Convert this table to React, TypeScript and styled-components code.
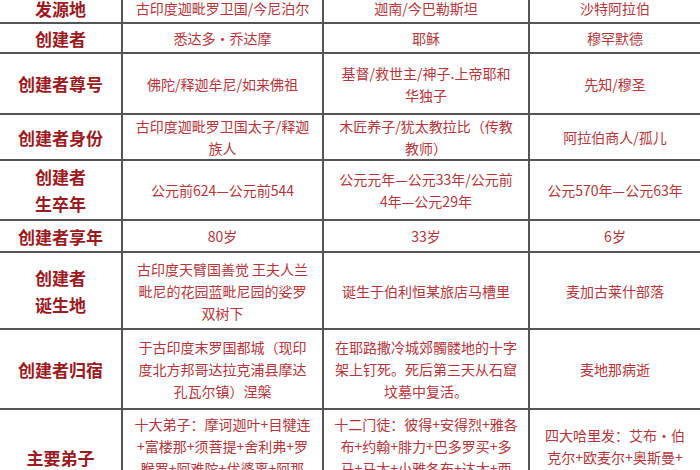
import React from 'react';
import styled, { createGlobalStyle } from 'styled-components';

const GlobalStyle = createGlobalStyle`
  html, body {
    margin: 0;
    padding: 0;
    background: #ffffff;
    overflow: hidden;
  }
  body {
    font-family: "Noto Sans CJK SC", "Noto Sans", sans-serif;
  }
`;

// 表格整体略微超出视口顶部和左侧
const Page = styled.div`
  width: 700px;
  height: 470px;
  overflow: hidden;
`;

const Table = styled.table`
  border-collapse: collapse;
  table-layout: fixed;
  margin: -8px 0 0 -2px;
  width: 702px;
`;

const Col = styled.col<{ $w: number }>`
  width: ${(p) => p.$w}px;
`;

const Row = styled.tr<{ $h: number }>`
  height: ${(p) => p.$h}px;
`;

const HeadCell = styled.th`
  border: 2px solid #555;
  color: #9a1a1f;
  font-size: 17px;
  font-weight: 700;
  line-height: 27px;
  text-align: center;
  vertical-align: middle;
  padding: 0 4px;
`;

const Cell = styled.td`
  border: 2px solid #555;
  color: #b3363c;
  font-size: 14px;
  line-height: 22px;
  text-align: center;
  vertical-align: middle;
  padding: 0 6px;
  white-space: nowrap;
`;

const Line = styled.span`
  display: block;
`;

type RowData = { head: string[]; h: number; cells: string[][] };

const widths = [123, 201, 206, 172];

const rows: RowData[] = [
  {
    head: ['发源地'],
    h: 30,
    cells: [['古印度迦毗罗卫国/今尼泊尔'], ['迦南/今巴勒斯坦'], ['沙特阿拉伯']],
  },
  {
    head: ['创建者'],
    h: 30,
    cells: [['悉达多·乔达摩'], ['耶稣'], ['穆罕默德']],
  },
  {
    head: ['创建者尊号'],
    h: 61,
    cells: [['佛陀/释迦牟尼/如来佛祖'], ['基督/救世主/神子.上帝耶和', '华独子'], ['先知/穆圣']],
  },
  {
    head: ['创建者身份'],
    h: 46,
    cells: [
      ['古印度迦毗罗卫国太子/释迦', '族人'],
      ['木匠养子/犹太教拉比（传教', '教师）'],
      ['阿拉伯商人/孤儿'],
    ],
  },
  {
    head: ['创建者', '生卒年'],
    h: 60,
    cells: [
      ['公元前624—公元前544'],
      ['公元元年—公元33年/公元前', '4年—公元29年'],
      ['公元570年—公元63年'],
    ],
  },
  {
    head: ['创建者享年'],
    h: 32,
    cells: [['80岁'], ['33岁'], ['6岁']],
  },
  {
    head: ['创建者', '诞生地'],
    h: 77,
    cells: [
      ['古印度天臂国善觉 王夫人兰', '毗尼的花园蓝毗尼园的娑罗', '双树下'],
      ['诞生于伯利恒某旅店马槽里'],
      ['麦加古莱什部落'],
    ],
  },
  {
    head: ['创建者归宿'],
    h: 80,
    cells: [
      ['于古印度末罗国都城（现印', '度北方邦哥达拉克浦县摩达', '孔瓦尔镇）涅槃'],
      ['在耶路撒冷城郊髑髅地的十字', '架上钉死。死后第三天从石窟', '坟墓中复活。'],
      ['麦地那病逝'],
    ],
  },
  {
    head: ['主要弟子'],
    h: 96,
    cells: [
      ['十大弟子：摩诃迦叶+目犍连', '+富楼那+须菩提+舍利弗+罗', '睺罗+阿难陀+优婆离+阿那', '律+迦旃延'],
      ['十二门徒：彼得+安得烈+雅各', '布+约翰+腓力+巴多罗买+多', '马+马太+小雅各布+达太+西', '门+犹大'],
      ['四大哈里发：艾布·伯', '克尔+欧麦尔+奥斯曼+', '阿里'],
    ],
  },
];

const App: React.FC = () => {
  return (
    <Page>
      <GlobalStyle />
      <Table>
        <colgroup>
          {widths.map((w, i) => (
            <Col key={i} $w={w} />
          ))}
        </colgroup>
        <tbody>
          {rows.map((r, i) => (
            <Row key={i} $h={r.h}>
              <HeadCell>
                {r.head.map((t, j) => (
                  <Line key={j}>{t}</Line>
                ))}
              </HeadCell>
              {r.cells.map((c, k) => (
                <Cell key={k}>
                  {c.map((t, j) => (
                    <Line key={j}>{t}</Line>
                  ))}
                </Cell>
              ))}
            </Row>
          ))}
        </tbody>
      </Table>
    </Page>
  );
};

export default App;
